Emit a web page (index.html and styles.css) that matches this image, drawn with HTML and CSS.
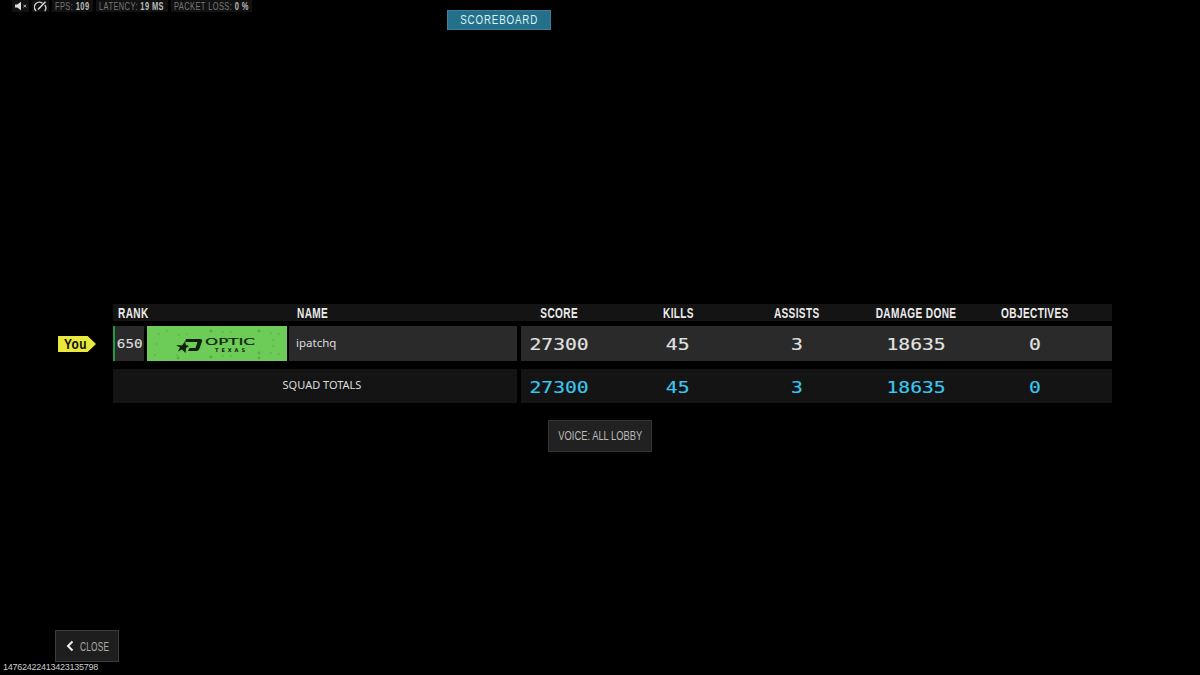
FILE: index.html
```html
<!DOCTYPE html>
<html lang="en">
<head>
  <meta charset="UTF-8" />
  <title>Scoreboard</title>
  <link rel="stylesheet" href="styles.css">
</head>
<body>
  <div class="page">
    <div class="top">
      <div class="status-bar">
        <div class="status-box icon-box">
          <svg width="14" height="10" viewBox="0 0 14 10"><path d="M1 3.500h2.200L7 .8v8.400L3.200 6.500H1z" fill="#ddd"/><path d="M9.500 3.800l2.600 2.600M12.100 3.800L9.500 6.400" stroke="#bbb" stroke-width="1" fill="none"/></svg>
        </div>
        <div class="status-box icon-box">
          <svg width="13" height="11" viewBox="0 0 13 11"><path d="M2.200 10A5 5 0 0 1 8.500 2.200M10.800 4A5 5 0 0 1 10.800 10" stroke="#ccc" stroke-width="1.400" fill="none"/><path d="M4 8.500L11.500 .8" stroke="#ddd" stroke-width="1.500"/></svg>
        </div>
        <div class="status-box stat-fps"><span class="status-text"><span class="dim">FPS:</span> <b>109</b></span></div>
        <div class="status-box stat-latency"><span class="status-text"><span class="dim">LATENCY:</span> <b>19 MS</b></span></div>
        <div class="status-box stat-loss"><span class="status-text"><span class="dim">PACKET LOSS:</span> <b>0 %</b></span></div>
      </div>
      <div class="tab"><span class="narrow">SCOREBOARD</span></div>
    </div>

    <div class="board">
      <div class="head-row">
        <div class="head-left">
          <span class="head-rank"><span class="narrow left">RANK</span></span>
          <span class="head-name"><span class="narrow left">NAME</span></span>
        </div>
        <div class="stat-cols">
          <span><span class="narrow">SCORE</span></span>
          <span><span class="narrow">KILLS</span></span>
          <span><span class="narrow">ASSISTS</span></span>
          <span><span class="narrow">DAMAGE DONE</span></span>
          <span><span class="narrow">OBJECTIVES</span></span>
        </div>
      </div>

      <div class="row player-row">
        <div class="you-tag"><span class="narrow left">You</span></div>
        <div class="left-cells">
          <div class="rank-cell"><span class="digits">650</span></div>
          <div class="calling-card">
            <svg width="140" height="35" viewBox="0 0 140 35">
              <g fill="#58ad45">
                <circle cx="32" cy="9" r=".8"/><circle cx="40" cy="8" r=".8"/><circle cx="64" cy="5" r="1.400"/><circle cx="76" cy="6" r=".8"/><circle cx="84" cy="6" r=".8"/><circle cx="112" cy="5" r="1.400"/><circle cx="124" cy="7" r=".8"/><circle cx="132" cy="8" r=".8"/><circle cx="12" cy="8" r=".8"/><circle cx="20" cy="5" r=".8"/>
                <circle cx="64" cy="31" r="1.400"/><circle cx="112" cy="27" r="1.400"/><circle cx="112" cy="32" r="1.400"/><circle cx="30" cy="29" r=".8"/><circle cx="31" cy="32" r="1.400"/><circle cx="76" cy="30" r=".8"/><circle cx="84" cy="30" r=".8"/><circle cx="124" cy="27" r=".8"/><circle cx="132" cy="28" r=".8"/><circle cx="8" cy="29" r=".8"/>
                <circle cx="126" cy="14" r=".8"/><circle cx="126" cy="20" r=".8"/><circle cx="10" cy="18" r=".8"/>
              </g>
              <path d="M29 19l6 .5 3-4 1 3.500 3 1-3 2-.5 5-3.500-3.500-4 2 2-4z" fill="#10200c"/>
              <path d="M39 13h14c2 0 2.500 1 2 2.500l-2.500 7c-.6 1.500-1.500 2.500-3 2.500H41l1.500-3h6l2-6H38z" fill="#10200c"/>
              <text x="58" y="19" class="logo-main" textLength="50" lengthAdjust="spacingAndGlyphs">OPTIC</text>
              <text x="68" y="26" class="logo-sub" textLength="30">TEXAS</text>
            </svg>
          </div>
          <div class="name-cell">ipatchq</div>
        </div>
        <div class="right-cell">
          <div class="stat-cols">
            <span><span class="digits">27300</span></span>
            <span><span class="digits">45</span></span>
            <span><span class="digits">3</span></span>
            <span><span class="digits">18635</span></span>
            <span><span class="digits">0</span></span>
          </div>
        </div>
      </div>

      <div class="row totals-row">
        <div class="totals-label">SQUAD TOTALS</div>
        <div class="right-cell">
          <div class="stat-cols">
            <span><span class="digits">27300</span></span>
            <span><span class="digits">45</span></span>
            <span><span class="digits">3</span></span>
            <span><span class="digits">18635</span></span>
            <span><span class="digits">0</span></span>
          </div>
        </div>
      </div>
    </div>

    <div class="voice-btn"><span class="narrow">VOICE: ALL LOBBY</span></div>

    <div class="bottom">
      <div class="close-btn">
        <svg width="8" height="12" viewBox="0 0 8 12"><path d="M6.500 1.500L2 6l4.500 4.500" stroke="#eee" stroke-width="2" fill="none"/></svg>
        <span class="narrow left">CLOSE</span>
      </div>
      <div class="match-id">14762422413423135798</div>
    </div>
  </div>
</body>
</html>
```
FILE: styles.css
```css
* {
  box-sizing: border-box;
}

html, body {
  margin: 0;
  background: #000;
}

body {
  font-family: "Liberation Sans", sans-serif;
  color: #e4e4e4;
}

.page {
  width: 1200px;
  height: 675px;
  overflow: hidden;
  display: flex;
  flex-direction: column;
}

/* no condensed font installed, so squeeze the caps */
.narrow {
  display: inline-block;
  white-space: nowrap;
  transform: scaleX(0.72);
}

.narrow.left {
  transform-origin: left center;
}

.top {
  height: 30px;
  display: grid;
}

.status-bar,
.tab {
  grid-area: 1 / 1;
}

.status-bar {
  display: flex;
  align-items: flex-start;
  gap: 3px;
  padding-left: 12px;
  align-self: start;
}

.status-box {
  height: 12px;
  background: #111;
  font-size: 11px;
  line-height: 12px;
  letter-spacing: 0.6px;
  padding-left: 3px;
  white-space: nowrap;
}

.status-text {
  display: inline-block;
  transform: scaleX(0.68);
  transform-origin: left center;
}

.status-box b {
  font-weight: bold;
  color: #bbb;
}

.dim {
  color: #777;
}

.icon-box {
  width: 17px;
  padding: 1px 0 0 2px;
  display: flex;
}

.stat-fps {
  width: 41px;
}

.stat-latency {
  width: 72px;
}

.stat-loss {
  width: 81px;
}

.tab {
  justify-self: start;
  align-self: end;
  margin-left: 447px;
  width: 104px;
  height: 20px;
  background: #24708a;
  border: 1px solid #3a8298;
  color: #dcf3f8;
  font-size: 12px;
  line-height: 18px;
  letter-spacing: 1.1px;
  text-align: center;
}

.tab .narrow {
  transform: scaleX(0.81);
}

.board {
  width: 999px;
  margin: 274px 0 0 113px;
}

.head-row {
  height: 17px;
  background: #141414;
  display: flex;
  font-size: 14px;
  font-weight: bold;
  line-height: 19px;
  letter-spacing: 0.5px;
  color: #ececec;
}

.head-left {
  width: 408px;
  display: flex;
  flex-shrink: 0;
}

.head-rank {
  margin-left: 5px;
  width: 179px;
}

.stat-cols {
  display: grid;
  grid-template-columns: repeat(5, 118.75px);
  margin-left: -21px;
  text-align: center;
}

.digits {
  font-family: "DejaVu Sans Mono", monospace;
  display: inline-block;
  -webkit-text-stroke: 0.15px currentColor;
}

.row {
  display: flex;
  position: relative;
}

.player-row {
  height: 35px;
  margin-top: 5px;
}

.totals-row {
  height: 34px;
  margin-top: 8px;
}

.you-tag {
  position: absolute;
  left: -55px;
  top: 10px;
  width: 38px;
  height: 16px;
  padding-left: 6px;
  background: #e9e93c;
  clip-path: polygon(0 0, 78% 0, 100% 50%, 78% 100%, 0 100%);
  color: #111;
  font-size: 14px;
  font-weight: bold;
  line-height: 16px;
  letter-spacing: 0.6px;
}

.you-tag .narrow {
  transform: scaleX(0.85);
}

.left-cells {
  width: 404px;
  margin-right: 4px;
  display: flex;
  flex-shrink: 0;
  border-left: 2px solid #1f9d3e;
}

.rank-cell {
  width: 29px;
  background: #2a2a2a;
  margin-right: 3px;
  font-size: 13px;
  line-height: 36px;
  text-align: center;
  color: #ddd;
}

.rank-cell .digits {
  transform: scaleX(1.1);
}

.calling-card {
  width: 140px;
  height: 35px;
  background: #6dcb57;
  margin-right: 2px;
}

.calling-card svg {
  display: block;
}

.logo-main {
  font-family: "DejaVu Sans", sans-serif;
  font-size: 9px;
  fill: #10200c;
  stroke: #10200c;
  stroke-width: 0.2px;
}

.logo-sub {
  font-family: "DejaVu Sans", sans-serif;
  font-size: 5px;
  font-weight: bold;
  fill: #10200c;
}

.name-cell {
  flex: 1;
  background: #2a2a2a;
  padding-left: 7px;
  font-family: "Noto Sans", sans-serif;
  font-size: 11.5px;
  line-height: 33px;
  color: #ddd;
}

.right-cell {
  flex: 1;
  overflow: hidden;
}

.player-row .right-cell {
  background: #2a2a2a;
}

.totals-row .right-cell {
  background: #141414;
}

.right-cell .stat-cols {
  line-height: 37px;
  font-size: 16px;
  color: #e2e2e2;
}

.right-cell .digits {
  transform: scaleX(1.23);
}

.totals-row .stat-cols {
  color: #3ac8f0;
}

.totals-label {
  width: 404px;
  margin-right: 4px;
  flex-shrink: 0;
  background: #141414;
  font-family: "Noto Sans", sans-serif;
  font-size: 11px;
  line-height: 32px;
  text-align: center;
  padding-left: 14px;
  color: #ddd;
}

.voice-btn {
  width: 104px;
  height: 32px;
  margin: 17px auto 0;
  background: #212121;
  border: 1px solid #333;
  display: flex;
  justify-content: center;
  font-size: 13px;
  line-height: 30px;
  color: #bbb;
}

.voice-btn .narrow {
  transform: scaleX(0.72);
}

.bottom {
  margin-top: auto;
  padding-bottom: 3px;
}

.close-btn {
  width: 64px;
  height: 32px;
  margin-left: 55px;
  background: #1e1e1e;
  border: 1px solid #3c3c3c;
  display: flex;
  align-items: center;
  gap: 6px;
  padding-left: 10px;
  font-size: 13px;
  letter-spacing: 0.3px;
  color: #aaa;
}

.close-btn svg {
  flex-shrink: 0;
}

.close-btn .narrow {
  transform: scaleX(0.64);
}

.match-id {
  margin-left: 3px;
  font-size: 9px;
  line-height: 10px;
  letter-spacing: -0.25px;
  color: #ccc;
}
```
